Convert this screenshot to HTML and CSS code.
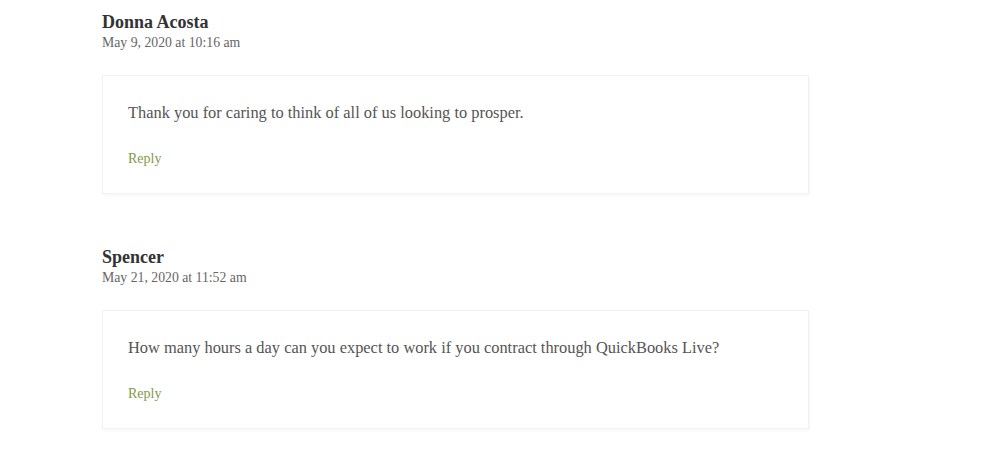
FILE: index.html
```html
<!DOCTYPE html>
<html lang="en">
<head>
    <meta charset="UTF-8">
    <meta name="viewport" content="width=device-width, initial-scale=1.0">
    <title>Comments</title>
    <link rel="stylesheet" href="styles.css">
</head>
<body>

    <main class="comments">
        <article class="comment">
            <div class="comment-author">Donna Acosta</div>
            <div class="comment-date">May 9, 2020 at 10:16 am</div>
            <div class="comment-body">
                <p>Thank you for caring to think of all of us looking to prosper.</p>
                <a href="#" class="reply">Reply</a>
            </div>
        </article>

        <article class="comment">
            <div class="comment-author">Spencer</div>
            <div class="comment-date">May 21, 2020 at 11:52 am</div>
            <div class="comment-body">
                <p>How many hours a day can you expect to work if you contract through QuickBooks Live?</p>
                <a href="#" class="reply">Reply</a>
            </div>
        </article>
    </main>

</body>
</html>
```

FILE: styles.css
```css
body {
    font-family: 'Liberation Serif', 'DejaVu Serif', serif;
    background-color: #fff;
    margin: 0;
    padding: 12px 0 0 102px;
    color: #555;
}

.comments {
    width: 707px;
}

.comment {
    margin-bottom: 53px;
}

.comment-author {
    font-size: 18px;
    font-weight: bold;
    line-height: 20px;
    color: #333;
}

.comment-date {
    font-size: 13.75px;
    line-height: 18px;
    margin-top: 2px;
    color: #666;
}

.comment-body {
    margin-top: 23px;
    padding: 25px 25px 24px;
    border: 1px solid #f1f1f1;
    box-shadow: 1px 2px 3px rgba(0, 0, 0, 0.03);
}

.comment-body p {
    margin: 0;
    font-size: 16.4px;
    line-height: 24px;
}

.reply {
    display: block;
    margin-top: 24px;
    font-size: 14px;
    line-height: 20px;
    color: #7f9a48;
    text-decoration: none;
}
```
